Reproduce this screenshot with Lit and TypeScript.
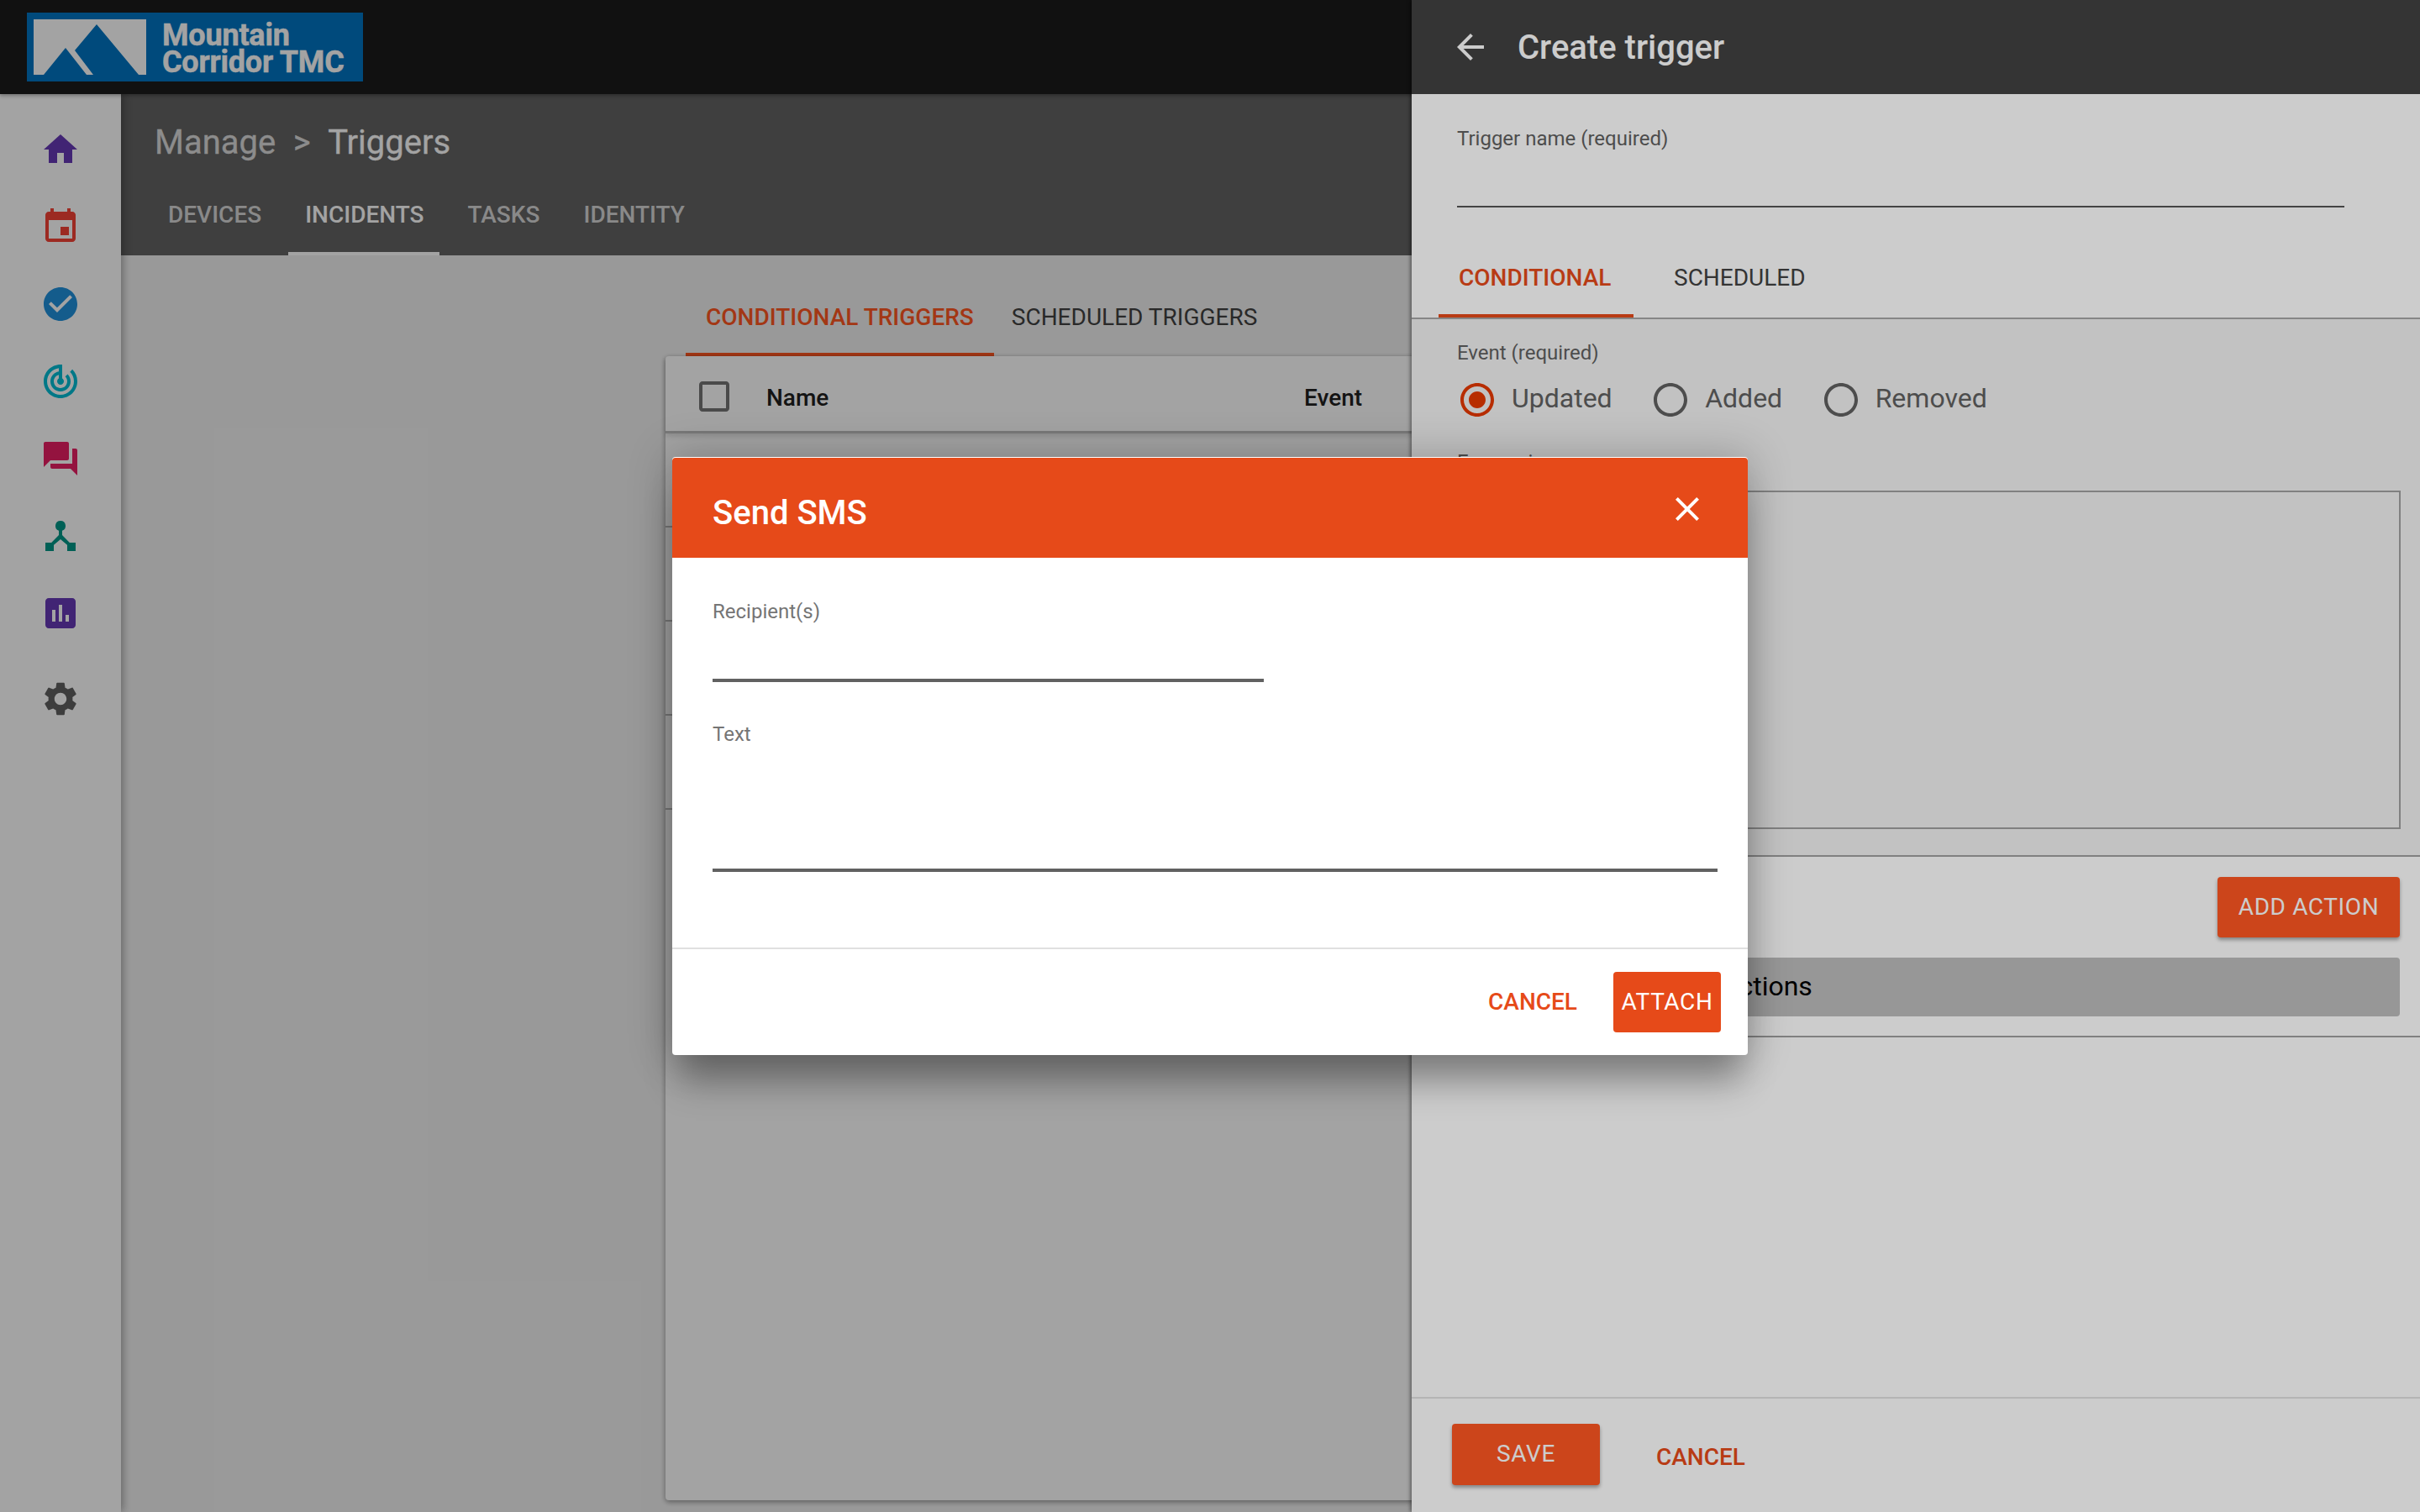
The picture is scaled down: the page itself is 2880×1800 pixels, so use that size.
import { LitElement, html, css, svg } from 'lit';
import { customElement } from 'lit/decorators.js';

const icon = (d: string, color = 'currentColor', size = 48) => html`<svg
  class="icon"
  viewBox="0 0 24 24"
  width=${size}
  height=${size}
  fill=${color}
>
  ${svg`<path d=${d}></path>`}
</svg>`;

const NAV = [
  { color: '#673ab7', d: 'M10 20v-6h4v6h5v-8h3L12 3 2 12h3v8z' },
  {
    color: '#f44336',
    d: 'M17 12h-5v5h5v-5zM16 1v2H8V1H6v2H5c-1.11 0-1.99.9-1.99 2L3 19c0 1.1.89 2 2 2h14c1.1 0 2-.9 2-2V5c0-1.1-.9-2-2-2h-1V1h-2zm3 18H5V8h14v11z',
  },
  {
    color: '#2090dc',
    d: 'M12 2C6.48 2 2 6.48 2 12s4.48 10 10 10 10-4.48 10-10S17.52 2 12 2zm-2 15l-5-5 1.41-1.41L10 14.17l7.59-7.59L19 8l-9 9z',
  },
  {
    color: '#00bcd4',
    d: 'M19.07 4.93l-1.41 1.41C19.1 7.79 20 9.79 20 12c0 4.42-3.58 8-8 8s-8-3.58-8-8c0-4.08 3.05-7.44 7-7.93v2.02C8.16 6.57 6 9.03 6 12c0 3.31 2.69 6 6 6s6-2.69 6-6c0-1.66-.67-3.16-1.76-4.24l-1.41 1.41C15.55 9.9 16 10.9 16 12c0 2.21-1.79 4-4 4s-4-1.79-4-4c0-1.86 1.28-3.41 3-3.86v2.14c-.6.35-1 .98-1 1.72 0 1.1.9 2 2 2s2-.9 2-2c0-.74-.4-1.38-1-1.72V2h-1C6.48 2 2 6.48 2 12s4.48 10 10 10 10-4.48 10-10c0-2.76-1.12-5.26-2.93-7.07z',
  },
  {
    color: '#e91e63',
    d: 'M21 6h-2v9H6v2c0 .55.45 1 1 1h11l4 4V7c0-.55-.45-1-1-1zm-4 6V3c0-.55-.45-1-1-1H3c-.55 0-1 .45-1 1v14l4-4h10c.55 0 1-.45 1-1z',
  },
  {
    color: '#009688',
    d: 'M12 3a3 3 0 0 0-1 5.83v2.67L6.6 16H3v5h5v-3.6l4-3.4 4 3.4V21h5v-5h-3.6L13 11.5V8.83A3 3 0 0 0 12 3z',
  },
  {
    color: '#673ab7',
    d: 'M19 3H5c-1.1 0-2 .9-2 2v14c0 1.1.9 2 2 2h14c1.1 0 2-.9 2-2V5c0-1.1-.9-2-2-2zM9 17H7v-7h2v7zm4 0h-2V7h2v10zm4 0h-2v-4h2v4z',
  },
];

const GEAR =
  'M19.14 12.94c.04-.3.06-.61.06-.94 0-.32-.02-.64-.07-.94l2.03-1.58c.18-.14.23-.41.12-.61l-1.92-3.32c-.12-.22-.37-.29-.59-.22l-2.39.96c-.5-.38-1.03-.7-1.62-.94l-.36-2.54c-.04-.24-.24-.41-.48-.41h-3.84c-.24 0-.43.17-.47.41l-.36 2.54c-.59.24-1.13.57-1.62.94l-2.39-.96c-.22-.08-.47 0-.59.22L2.74 8.87c-.12.21-.08.47.12.61l2.03 1.58c-.05.3-.09.63-.09.94s.02.64.07.94l-2.03 1.58c-.18.14-.23.41-.12.61l1.92 3.32c.12.22.37.29.59.22l2.39-.96c.5.38 1.03.7 1.62.94l.36 2.54c.05.24.24.41.48.41h3.84c.24 0 .44-.17.47-.41l.36-2.54c.59-.24 1.13-.56 1.62-.94l2.39.96c.22.08.47 0 .59-.22l1.92-3.32c.12-.22.07-.47-.12-.61l-2.01-1.58zM12 15.6c-1.98 0-3.6-1.62-3.6-3.6s1.62-3.6 3.6-3.6 3.6 1.62 3.6 3.6-1.62 3.6-3.6 3.6z';
const ARROW = 'M20 11H7.83l5.59-5.59L12 4l-8 8 8 8 1.41-1.41L7.83 13H20v-2z';
const CLOSE =
  'M19 6.41L17.59 5 12 10.59 6.41 5 5 6.41 10.59 12 5 17.59 6.41 19 12 13.41 17.59 19 19 17.59 13.41 12z';
const CHECKBOX =
  'M19 5v14H5V5h14m0-2H5c-1.1 0-2 .9-2 2v14c0 1.1.9 2 2 2h14c1.1 0 2-.9 2-2V5c0-1.1-.9-2-2-2z';
const RADIO_OFF =
  'M12 2C6.48 2 2 6.48 2 12s4.48 10 10 10 10-4.48 10-10S17.52 2 12 2zm0 18c-4.42 0-8-3.58-8-8s3.58-8 8-8 8 3.58 8 8-3.58 8-8 8z';
const RADIO_ON =
  'M12 7c-2.76 0-5 2.24-5 5s2.24 5 5 5 5-2.24 5-5-2.24-5-5-5zm0-5C6.48 2 2 6.48 2 12s4.48 10 10 10 10-4.48 10-10S17.52 2 12 2zm0 18c-4.42 0-8-3.58-8-8s3.58-8 8-8 8 3.58 8 8-3.58 8-8 8z';

@customElement('app-root')
export class AppRoot extends LitElement {
  static styles = css`
    :host {
      display: block;
      position: relative;
      width: 2880px;
      height: 1800px;
      overflow: hidden;
      font-family: Roboto, 'Liberation Sans', sans-serif;
      background: #f1f1f1;
    }

    .icon {
      display: block;
      flex: none;
    }

    /* page under the scrims */
    .topbar {
      height: 112px;
      background: #1c1c1c;
      display: flex;
      align-items: flex-start;
      padding: 15px 0 0 32px;
      box-sizing: border-box;
      position: relative;
      z-index: 2;
      box-shadow: 0 2px 4px rgba(0, 0, 0, 0.3);
    }

    .logo {
      width: 400px;
      height: 82px;
      background: #0075c2;
      display: flex;
      padding: 8px 0 0 8px;
      box-sizing: border-box;
      color: #fff;
      gap: 19px;
    }

    .logo svg {
      display: block;
    }

    .logo-text {
      font-size: 36px;
      font-weight: 700;
      line-height: 32px;
      padding-top: 3px;
      letter-spacing: -0.2px;
      -webkit-text-stroke: 0.5px #fff;
    }

    .body {
      display: flex;
      height: 1688px;
    }

    .sidebar {
      width: 144px;
      flex: none;
      background: #fff;
      box-sizing: border-box;
      padding: 42px 0 0 48px;
      display: flex;
      flex-direction: column;
      gap: 44px;
      position: relative;
      z-index: 1;
      box-shadow: 2px 0 10px rgba(0, 0, 0, 0.35);
    }

    .sidebar .gear {
      margin-top: 10px;
    }

    .main {
      flex: 1;
      min-width: 0;
    }

    .page-head {
      height: 192px;
      background: #636363;
      box-sizing: border-box;
      padding-top: 34px;
    }

    .crumbs {
      display: flex;
      gap: 20.5px;
      padding-left: 40px;
      font-size: 40px;
      line-height: 48px;
      color: #dcdcdc;
      -webkit-text-stroke: 0.3px currentColor;
    }

    .crumbs .current {
      color: #fff;
    }

    .head-tabs {
      display: flex;
      padding-left: 36px;
      margin-top: 22px;
    }

    .head-tab {
      padding: 0 20px;
      height: 88px;
      box-sizing: border-box;
      margin-right: 12px;
      font-size: 28px;
      font-weight: 500;
      line-height: 80px;
      color: #d8d8d8;
    }

    .head-tab.active {
      color: #fff;
      border-bottom: 4px solid #fff;
      padding-right: 18px;
      margin-right: 14px;
    }

    .content {
      display: flex;
      flex-direction: column;
      padding-left: 648px;
    }

    .trigger-tabs {
      display: flex;
      margin-left: 24px;
      height: 120px;
      box-sizing: border-box;
    }

    .trigger-tab {
      padding: 0 24px;
      font-size: 28px;
      line-height: 148px;
      color: #424242;
      box-sizing: border-box;
    }

    .trigger-tab.active {
      font-weight: 500;
      color: #ff5722;
      border-bottom: 4px solid #ff5722;
    }

    .trigger-tab:not(.active) {
      padding-left: 21px;
    }

    .card {
      width: 1440px;
      height: 1362px;
      background: #fff;
      border-radius: 4px;
      box-shadow: 0 2px 6px rgba(0, 0, 0, 0.4);
    }

    .row {
      height: 112px;
      box-sizing: border-box;
      border-bottom: 2px solid #bdbdbd;
    }

    .row.head {
      height: 92px;
      display: flex;
      align-items: center;
      padding: 9px 0 0 34px;
      border-bottom: 3px solid #bdbdbd;
      box-shadow: 0 3px 6px rgba(0, 0, 0, 0.15);
      font-size: 28px;
      font-weight: 500;
      color: #212121;
    }

    .row.head .icon {
      color: #757575;
      margin-top: -2px;
    }

    .row.head .name {
      width: 640px;
      margin-left: 38px;
    }

    /* full screen scrim between the page and the side panel */
    .scrim {
      position: absolute;
      inset: 0;
      background: rgba(0, 0, 0, 0.2);
      z-index: 3;
    }

    .panel {
      position: absolute;
      top: 0;
      right: 0;
      bottom: 0;
      width: 1200px;
      background: #fff;
      z-index: 4;
      display: flex;
      flex-direction: column;
      box-shadow: -2px 0 4px rgba(0, 0, 0, 0.4);
    }

    .panel-head {
      height: 112px;
      flex: none;
      background: #424242;
      color: #fff;
      display: flex;
      align-items: center;
      padding-left: 46px;
      gap: 32px;
      font-size: 40px;
      font-weight: 500;
    }

    .panel-field {
      padding: 39px 0 0 54px;
      height: 136px;
      flex: none;
      box-sizing: border-box;
    }

    .field-label {
      font-size: 24px;
      line-height: 28px;
      color: #616161;
    }

    .panel-field .field-line {
      width: 1056px;
      height: 2px;
      margin-top: 66px;
      background: #555;
    }

    .panel-tabs {
      display: flex;
      height: 132px;
      flex: none;
      box-sizing: border-box;
      padding: 0 0 0 32px;
      border-bottom: 2px solid #a8a8a8;
    }

    .panel-tab {
      box-sizing: border-box;
      width: 232px;
      height: 130px;
      padding: 67px 0 0 24px;
      font-size: 28px;
      line-height: 32px;
      color: #424242;
    }

    .panel-tab.active {
      font-weight: 500;
      color: #e64a19;
      border-bottom: 4px solid #e64a19;
    }

    .panel-tab:not(.active) {
      padding-left: 48px;
    }

    .event-box {
      height: 640px;
      flex: none;
      box-sizing: border-box;
      background: #f3f3f3;
      border-bottom: 2px solid #a0a0a0;
      padding: 26px 23px 0 54px;
    }

    .radios {
      display: flex;
      margin-top: 18px;
      height: 48px;
      color: #616161;
      font-size: 32px;
      line-height: 44px;
    }

    .radio {
      display: flex;
      gap: 17px;
      margin-right: 45.5px;
    }

    .radio.on .icon {
      color: #e53900;
    }

    .expr-label {
      margin-top: 36px;
    }

    .expr {
      height: 403px;
      margin-top: 20px;
      border: 2px solid #a0a0a0;
      box-sizing: border-box;
    }

    .actions {
      height: 215px;
      flex: none;
      box-sizing: border-box;
      border-bottom: 2px solid #a0a0a0;
      padding: 24px 24px 0 54px;
    }

    .action-row {
      display: flex;
      justify-content: flex-end;
    }

    .btn {
      border-radius: 4px;
      background: #ff5722;
      color: #fff;
      font-size: 28px;
      font-weight: 400;
      letter-spacing: 0.6px;
      text-align: center;
      box-shadow: 0 3px 4px rgba(0, 0, 0, 0.35);
    }

    .add-action {
      width: 217px;
      height: 72px;
      line-height: 72px;
    }

    .action-list {
      margin-top: 24px;
      height: 70px;
      line-height: 68px;
      font-size: 32px;
      color: #000;
      background: #bdbdbd;
      border-radius: 4px;
      padding-left: 269px;
    }

    .spacer {
      flex: 1;
    }

    .panel-foot {
      height: 137px;
      flex: none;
      box-sizing: border-box;
      border-top: 2px solid #e2e2e2;
      display: flex;
      padding: 30px 0 0 48px;
    }

    .save {
      width: 176px;
      height: 73px;
      line-height: 72px;
    }

    .panel-cancel {
      margin-left: 67px;
      font-size: 28px;
      font-weight: 500;
      line-height: 80px;
      color: #e64a19;
    }

    /* second scrim + dialog */
    .scrim.top {
      z-index: 5;
    }

    .dialog {
      position: absolute;
      left: 800px;
      top: 544px;
      width: 1280px;
      height: 712px;
      z-index: 6;
      background: #fff;
      border-radius: 4px;
      display: flex;
      flex-direction: column;
      overflow: hidden;
      box-shadow: 0 40px 40px -8px rgba(0, 0, 0, 0.3),
        0 0 50px 4px rgba(0, 0, 0, 0.22);
    }

    .dialog-head {
      height: 119px;
      margin-top: 1px;
      flex: none;
      box-sizing: border-box;
      background: #e64a19;
      color: #fff;
      display: flex;
      align-items: flex-start;
      justify-content: space-between;
      padding: 42px 48px 0 48px;
      font-size: 40px;
      font-weight: 500;
      line-height: 48px;
      border-radius: 4px 4px 0 0;
    }

    .dialog-head .icon {
      margin-top: -5px;
    }

    .dialog-body {
      flex: 1;
      padding: 50px 36px 0 48px;
    }

    .dialog-body .field-label {
      color: #757575;
    }

    .dialog-line {
      height: 4px;
      background: #616161;
    }

    .dialog-line.short {
      width: 656px;
      margin-top: 66px;
      margin-bottom: 48px;
    }

    .dialog-line.long {
      margin-top: 146px;
    }

    .dialog-foot {
      height: 128px;
      flex: none;
      box-sizing: border-box;
      border-top: 2px solid #e0e0e0;
      display: flex;
      justify-content: flex-end;
      padding: 27px 32px 0 0;
    }

    .dialog-cancel {
      font-size: 28px;
      font-weight: 500;
      line-height: 72px;
      color: #e64a19;
      margin-right: 43px;
    }

    .attach {
      width: 128px;
      height: 72px;
      line-height: 72px;
      background: #e64a19;
      box-shadow: none;
    }
  `;

  render() {
    return html`
      <div class="topbar">
        <div class="logo">
          <svg width="134" height="66" viewBox="0 0 134 66">
            <rect width="134" height="66" fill="#fff"></rect>
            <path
              d="M12 66 38 34 63 66zM49 37 75 6 125 66H71z"
              fill="#0075c2"
            ></path>
          </svg>
          <div class="logo-text">Mountain<br />Corridor TMC</div>
        </div>
      </div>
      <div class="body">
        <nav class="sidebar">
          ${NAV.map((n) => icon(n.d, n.color))}
          <div class="gear">${icon(GEAR, '#616161')}</div>
        </nav>
        <div class="main">
          <div class="page-head">
            <div class="crumbs">
              <span>Manage</span><span>&gt;</span>
              <span class="current">Triggers</span>
            </div>
            <div class="head-tabs">
              <div class="head-tab">DEVICES</div>
              <div class="head-tab active">INCIDENTS</div>
              <div class="head-tab">TASKS</div>
              <div class="head-tab">IDENTITY</div>
            </div>
          </div>
          <div class="content">
            <div class="trigger-tabs">
              <div class="trigger-tab active">CONDITIONAL TRIGGERS</div>
              <div class="trigger-tab">SCHEDULED TRIGGERS</div>
            </div>
            <div class="card">
              <div class="row head">
                ${icon(CHECKBOX)}
                <div class="name">Name</div>
                <div>Event</div>
              </div>
              <div class="row"></div>
              <div class="row"></div>
              <div class="row"></div>
              <div class="row"></div>
            </div>
          </div>
        </div>
      </div>

      <div class="scrim"></div>

      <aside class="panel">
        <div class="panel-head">${icon(ARROW)}<span>Create trigger</span></div>
        <div class="panel-field">
          <div class="field-label">Trigger name (required)</div>
          <div class="field-line"></div>
        </div>
        <div class="panel-tabs">
          <div class="panel-tab active">CONDITIONAL</div>
          <div class="panel-tab">SCHEDULED</div>
        </div>
        <div class="event-box">
          <div class="field-label">Event (required)</div>
          <div class="radios">
            <div class="radio on">${icon(RADIO_ON)}<span>Updated</span></div>
            <div class="radio">${icon(RADIO_OFF)}<span>Added</span></div>
            <div class="radio">${icon(RADIO_OFF)}<span>Removed</span></div>
          </div>
          <div class="field-label expr-label">Expression</div>
          <div class="expr"></div>
        </div>
        <div class="actions">
          <div class="action-row"><div class="btn add-action">ADD ACTION</div></div>
          <div class="action-list">No actions</div>
        </div>
        <div class="spacer"></div>
        <div class="panel-foot">
          <div class="btn save">SAVE</div>
          <div class="panel-cancel">CANCEL</div>
        </div>
      </aside>

      <div class="scrim top"></div>
      <section class="dialog">
        <div class="dialog-head">
          <span>Send SMS</span>
          ${icon(CLOSE, '#fff')}
        </div>
        <div class="dialog-body">
          <div class="field-label">Recipient(s)</div>
          <div class="dialog-line short"></div>
          <div class="field-label">Text</div>
          <div class="dialog-line long"></div>
        </div>
        <div class="dialog-foot">
          <div class="dialog-cancel">CANCEL</div>
          <div class="btn attach">ATTACH</div>
        </div>
      </section>
    `;
  }
}

declare global {
  interface HTMLElementTagNameMap {
    'app-root': AppRoot;
  }
}
